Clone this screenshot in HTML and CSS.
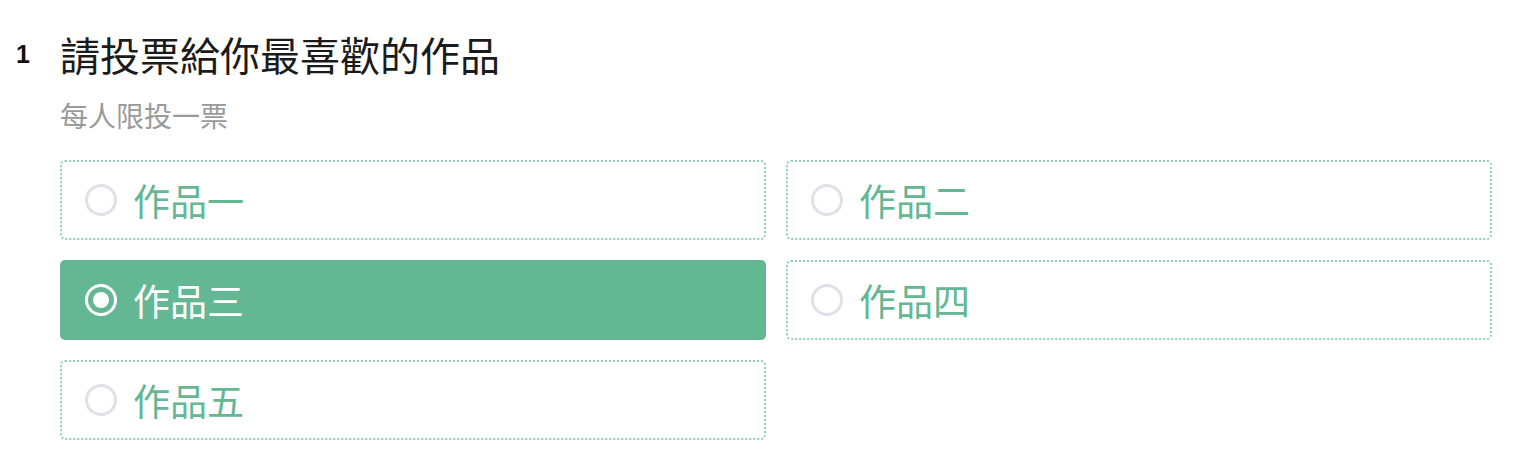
FILE: index.html
```html
<!DOCTYPE html>
<html lang="zh-Hant">
<head>
  <meta charset="UTF-8">
  <meta name="viewport" content="width=device-width, initial-scale=1.0">
  <title>投票</title>
  <link rel="stylesheet" href="styles.css">
</head>
<body>
  <div class="question">
    <div class="q-num">1</div>
    <div class="q-body">
      <h2 class="q-title">請投票給你最喜歡的作品</h2>
      <p class="q-hint">每人限投一票</p>
      <div class="options">
        <label class="option"><span class="radio"></span><span class="label">作品一</span></label>
        <label class="option"><span class="radio"></span><span class="label">作品二</span></label>
        <label class="option selected"><span class="radio"></span><span class="label">作品三</span></label>
        <label class="option"><span class="radio"></span><span class="label">作品四</span></label>
        <label class="option"><span class="radio"></span><span class="label">作品五</span></label>
      </div>
    </div>
  </div>
</body>
</html>
```

FILE: styles.css
```css
/* Page */
body {
  margin: 0;
  background: #fff;
  font-family: "Noto Sans CJK TC", "Noto Sans", sans-serif;
}

/* Question block */
.question {
  display: flex;
  padding: 32px 28px 0 0;
}

.q-num {
  width: 60px;
  box-sizing: border-box;
  padding-left: 16px;
  font-family: "Liberation Sans", Arial, sans-serif;
  font-weight: bold;
  font-size: 25px;
  line-height: 44px;
  color: #111;
}

.q-body {
  flex: 1;
}

.q-title {
  margin: 0;
  font-size: 40px;
  font-weight: 400;
  line-height: 44px;
  color: #1b1b1b;
}

.q-hint {
  margin: 24px 0 30px;
  font-size: 28px;
  line-height: 30px;
  color: #9a9a9a;
}

/* Option grid */
.options {
  display: grid;
  grid-template-columns: 1fr 1fr;
  gap: 20px;
}

.option {
  display: flex;
  align-items: center;
  gap: 16px;
  height: 80px;
  box-sizing: border-box;
  padding-left: 23px;
  border: 2px dotted #8dd2b3;
  border-radius: 5px;
  color: #63b793;
  cursor: pointer;
}

.radio {
  width: 32px;
  height: 32px;
  box-sizing: border-box;
  border: 3px solid #dfe0e8;
  border-radius: 50%;
  position: relative;
}

.label {
  font-size: 37px;
  line-height: 40px;
}

/* Selected state */
.option.selected {
  background: #63b793;
  border: 2px solid #63b793;
  color: #fff;
}

.option.selected .radio {
  border-color: #fff;
}

.option.selected .radio::after {
  content: "";
  position: absolute;
  top: 5px;
  left: 5px;
  width: 16px;
  height: 16px;
  border-radius: 50%;
  background: #fff;
}
```
